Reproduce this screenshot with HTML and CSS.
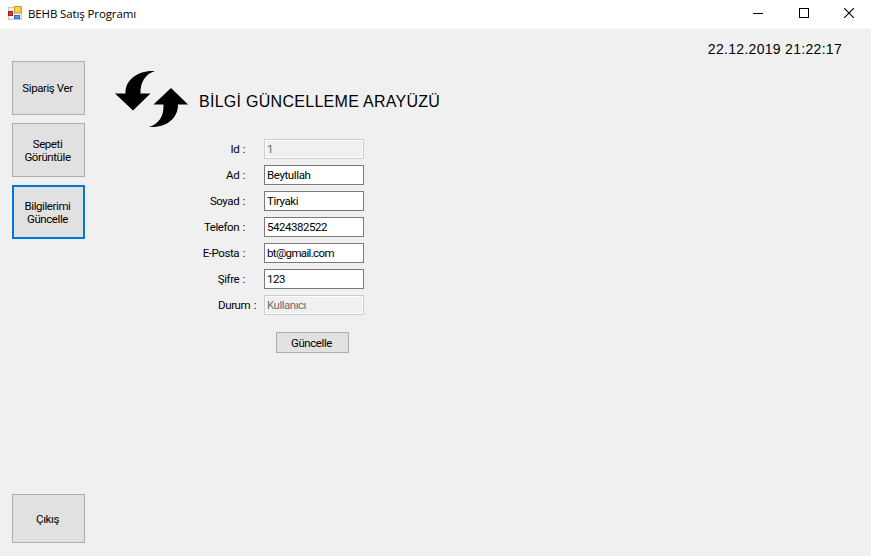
FILE: index.html
```html
<!DOCTYPE html>
<html lang="tr">
<head>
<meta charset="utf-8">
<title>BEHB Satış Programı</title>
<link rel="stylesheet" href="styles.css">
</head>
<body>
<div class="window">
  <header class="titlebar">
    <svg class="app-icon" width="14" height="14" viewBox="0 0 14 14">
      <rect x="0.5" y="1.5" width="13" height="12" fill="#f4f4f4" stroke="#c4c4c4"/>
      <rect x="0.5" y="5.500" width="4" height="4" fill="#cf3b2b" stroke="#9b2419"/>
      <rect x="6.5" y="0.5" width="6.500" height="6.500" fill="#fcd34f" stroke="#c99a22"/>
      <rect x="6.5" y="9.5" width="5" height="3" fill="#5b94ee" stroke="#316bcf"/>
    </svg>
    <span class="title">BEHB Satış Programı</span>
    <div class="controls">
      <svg width="10" height="10" viewBox="0 0 10 10" shape-rendering="crispEdges"><path d="M0 5.5H10" stroke="#000"/></svg>
      <svg width="10" height="10" viewBox="0 0 10 10" shape-rendering="crispEdges"><rect x="0.5" y="0.5" width="9" height="9" fill="none" stroke="#000"/></svg>
      <svg width="10" height="10" viewBox="0 0 10 10"><path d="M0 0L10 10M10 0L0 10" stroke="#000" stroke-width="1.1"/></svg>
    </div>
  </header>
  <div class="body">
    <nav class="sidebar">
      <button class="btn nav-btn">Sipariş Ver</button>
      <button class="btn nav-btn">Sepeti<br>Görüntüle</button>
      <button class="btn nav-btn active">Bilgilerimi<br>Güncelle</button>
      <button class="btn exit-btn">Çıkış</button>
    </nav>
    <main class="content">
      <div class="clock">22.12.2019 21:22:17</div>
      <div class="heading">
        <svg width="74" height="58" viewBox="0 0 74 58">
          <path d="M40 1C27 0 10 7 10.500 23.500H0L18 40.500L35.500 23.500H25.500C25 13 30 4 40 1Z"/>
          <path d="M34 57C48 58 63 51 63 34.500H73L56 18L38.500 34.500H48.500C49 46 44 54 34 57Z"/>
        </svg>
        <h1>BİLGİ GÜNCELLEME ARAYÜZÜ</h1>
      </div>
      <form class="form">
        <div class="row"><label for="id">Id :</label><input id="id" class="digits" value="1" disabled></div>
        <div class="row"><label for="ad">Ad :</label><input id="ad" value="Beytullah"></div>
        <div class="row"><label for="soyad">Soyad :</label><input id="soyad" value="Tiryaki"></div>
        <div class="row"><label for="telefon">Telefon :</label><input id="telefon" class="digits" value="5424382522"></div>
        <div class="row"><label for="eposta">E-Posta :</label><input id="eposta" class="mail" value="bt@gmail.com"></div>
        <div class="row"><label for="sifre">Şifre :</label><input id="sifre" class="digits" value="123"></div>
        <div class="row"><label for="durum" class="wide">Durum :</label><input id="durum" class="status" value="Kullanıcı" disabled></div>
        <button type="button" class="btn submit">Güncelle</button>
      </form>
    </main>
  </div>
</div>
</body>
</html>
```

FILE: styles.css
```css
* { box-sizing: border-box; }
body {
  margin: 0;
  background: #f0f0f0;
  color: #000;
  font-family: Roboto, "Open Sans", sans-serif;
  font-size: 11.5px;
  letter-spacing: -0.42px;
}
.window { display: flex; flex-direction: column; width: 871px; height: 556px; overflow: hidden; }
.titlebar { display: flex; align-items: center; height: 29px; padding: 0 17px 3px 8px; background: #fff; border-bottom: 1px solid #f8f8f8; }
.title { margin-left: 6px; padding-top: 2px; font-family: "Open Sans", sans-serif; font-size: 11.5px; letter-spacing: -0.12px; }
.controls { display: flex; gap: 35.5px; margin-left: auto; padding-top: 1px; }
.body { display: flex; flex: 1; }
.sidebar { display: flex; flex-direction: column; gap: 8px; width: 85px; padding: 32px 0 13px 12px; }
.btn {
  padding: 1px 2px 0 0;
  border: 1px solid #adadad;
  background: #e1e1e1;
  color: #000;
  font: inherit;
  letter-spacing: inherit;
  line-height: 13px;
  text-align: center;
}
.nav-btn { height: 54px; }
.active { border: 2px solid #0078d7; }
.exit-btn { height: 49px; margin-top: auto; }
.content { flex: 1; }
.clock {
  padding: 11px 29px 0 0;
  font: 14px/18px "Liberation Sans", Arial, sans-serif;
  letter-spacing: 0.3px;
  text-align: right;
}
.heading { display: flex; margin: 12px 0 0 29.5px; height: 58px; }
h1 {
  margin: 22px 0 0 10.5px;
  font: 16px/20px "Liberation Sans", Arial, sans-serif;
  letter-spacing: 0.28px;
  white-space: nowrap;
}
.form { display: flex; flex-direction: column; gap: 6px; margin-top: 11px; }
.row { display: flex; height: 20px; }
label { width: 160px; margin-right: 19px; line-height: 20px; text-align: right; word-spacing: 1px; }
.wide { width: 171px; margin-right: 8px; }
input {
  width: 100px;
  height: 20px;
  padding: 0 2px;
  border: 1px solid #7a7a7a;
  border-radius: 0;
  background: #fff;
  color: #000;
  font: inherit;
  letter-spacing: -0.38px;
}
.digits { letter-spacing: -0.45px; }
.mail { letter-spacing: -0.65px; }
.status { letter-spacing: -0.5px; }
input:disabled { border-color: #ccc; background: #f0f0f0; color: #6d6d6d; box-shadow: inset 0 0 0 1px #fff; }
.submit { width: 73px; height: 21px; margin: 11px 0 0 191px; }
```
